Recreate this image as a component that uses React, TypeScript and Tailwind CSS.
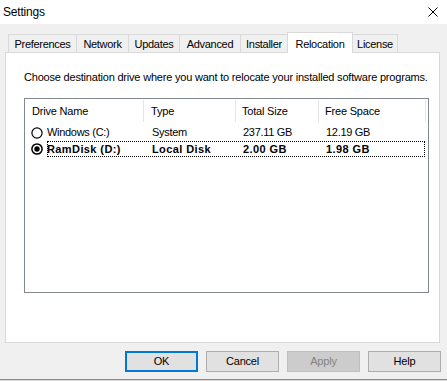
import React from "react";

const tabs: { label: string; w: string; active?: boolean; last?: boolean }[] = [
  { label: "Preferences", w: "w-[68px]" },
  { label: "Network", w: "w-[52px]" },
  { label: "Updates", w: "w-[51px]" },
  { label: "Advanced", w: "w-[61px]" },
  { label: "Installer", w: "w-[47px]" },
  { label: "Relocation", w: "w-[66px]", active: true },
  { label: "License", w: "w-[45px]", last: true },
];

function Radio({ checked }: { checked?: boolean }) {
  return (
    <svg width="12" height="12" viewBox="0 0 12 12" className="shrink-0">
      <circle cx="6" cy="6" r="5.1" fill="white" stroke="#000" strokeWidth={checked ? 1.5 : 1.2} />
      {checked && <circle cx="6" cy="6" r="2.7" fill="#000" />}
    </svg>
  );
}

export default function App() {
  return (
    <div
      className="w-[447px] h-[381px] bg-[#f0f0f0] flex flex-col text-[11px] text-black overflow-hidden"
      style={{ fontFamily: '"Liberation Sans", Arial, sans-serif' }}
    >
      {/* Title bar */}
      <div className="h-[24px] bg-white flex items-center justify-between pl-[3px] pr-[9px] shrink-0">
        <span className="text-[12px] tracking-[-0.2px] leading-none">Settings</span>
        <svg width="10" height="10" viewBox="0 0 10 10">
          <path d="M0.5 0.5 L9.5 9.5 M9.5 0.5 L0.5 9.5" stroke="#000" strokeWidth="1" />
        </svg>
      </div>

      {/* Tabs */}
      <div className="flex items-end pl-[8px] pt-[7px] h-[28px] shrink-0 tracking-[-0.3px]">
        {tabs.map((t) =>
          t.active ? (
            <div
              key={t.label}
              className={`${t.w} h-[21px] -mb-px relative z-10 bg-white border border-b-0 border-[#d9d9d9] flex items-start justify-center pt-[3px]`}
            >
              {t.label}
            </div>
          ) : (
            <div
              key={t.label}
              className={`${t.w} h-[18px] bg-[#f0f0f0] border-t border-[#d9d9d9] ${
                t.last ? "border-r" : "border-l"
              } flex items-center justify-center pt-[1px]`}
            >
              {t.label}
            </div>
          )
        )}
      </div>

      {/* Panel */}
      <div className="ml-[5px] w-[435px] h-[291px] bg-white border border-[#d9d9d9] flex flex-col shrink-0">
        <div className="pl-[18px] pt-[18px] h-[45px] tracking-[-0.2px] leading-[13px] whitespace-nowrap">
          Choose destination drive where you want to relocate your installed software programs.
        </div>
        <div className="ml-[18px] w-[405px] h-[195px] border border-[#828790] flex flex-col">
          {/* Header */}
          <div className="h-[25px] flex items-stretch tracking-[-0.2px] pt-[1px] pb-[2px]">
            <div className="w-[119px] pl-[7px] flex items-center border-r border-[#e5e5e5]">Drive Name</div>
            <div className="w-[92px] pl-[7px] flex items-center border-r border-[#e5e5e5]">Type</div>
            <div className="w-[83px] pl-[6px] flex items-center border-r border-[#e5e5e5]">Total Size</div>
            <div className="w-[107px] pl-[6px] flex items-center border-r border-[#e5e5e5]">Free Space</div>
          </div>
          {/* Rows */}
          <div className="h-[17px] flex items-center tracking-[-0.3px]">
            <div className="w-[120px] pl-[6px] flex items-center gap-[4px]">
              <Radio />
              <span>Windows (C:)</span>
            </div>
            <div className="w-[92px] pl-[7px]">System</div>
            <div className="w-[83px] pl-[6px]">237.11 GB</div>
            <div className="w-[107px] pl-[6px]">12.19 GB</div>
          </div>
          <div className="h-[16px] flex items-center font-bold tracking-[0.4px] relative">
            <div className="w-[120px] pl-[6px] flex items-center gap-[4px]">
              <Radio checked />
              <span>RamDisk (D:)</span>
            </div>
            <div className="w-[92px] pl-[7px]">Local Disk</div>
            <div className="w-[83px] pl-[6px]">2.00 GB</div>
            <div className="w-[107px] pl-[6px]">1.98 GB</div>
            <div className="absolute left-[22px] right-[3px] top-0 bottom-0 border border-dotted border-black pointer-events-none" />
          </div>
        </div>
      </div>

      {/* Buttons */}
      <div className="flex justify-end gap-[8px] pr-[6px] mt-[8px] tracking-[-0.2px]">
        <button className="w-[73px] h-[21px] bg-[#e1e1e1] border-2 border-[#0078d7] flex items-center justify-center">
          OK
        </button>
        <button className="w-[73px] h-[21px] bg-[#e1e1e1] border border-[#adadad] flex items-center justify-center">
          Cancel
        </button>
        <button className="w-[73px] h-[21px] bg-[#cccccc] border border-[#bfbfbf] text-[#838383] flex items-center justify-center">
          Apply
        </button>
        <button className="w-[73px] h-[21px] bg-[#e1e1e1] border border-[#adadad] flex items-center justify-center">
          Help
        </button>
      </div>

      <div className="flex-1" />
      <div className="h-px bg-[#8a8a8a] shrink-0" />
      <div className="h-px bg-[#dadada] shrink-0" />
    </div>
  );
}
